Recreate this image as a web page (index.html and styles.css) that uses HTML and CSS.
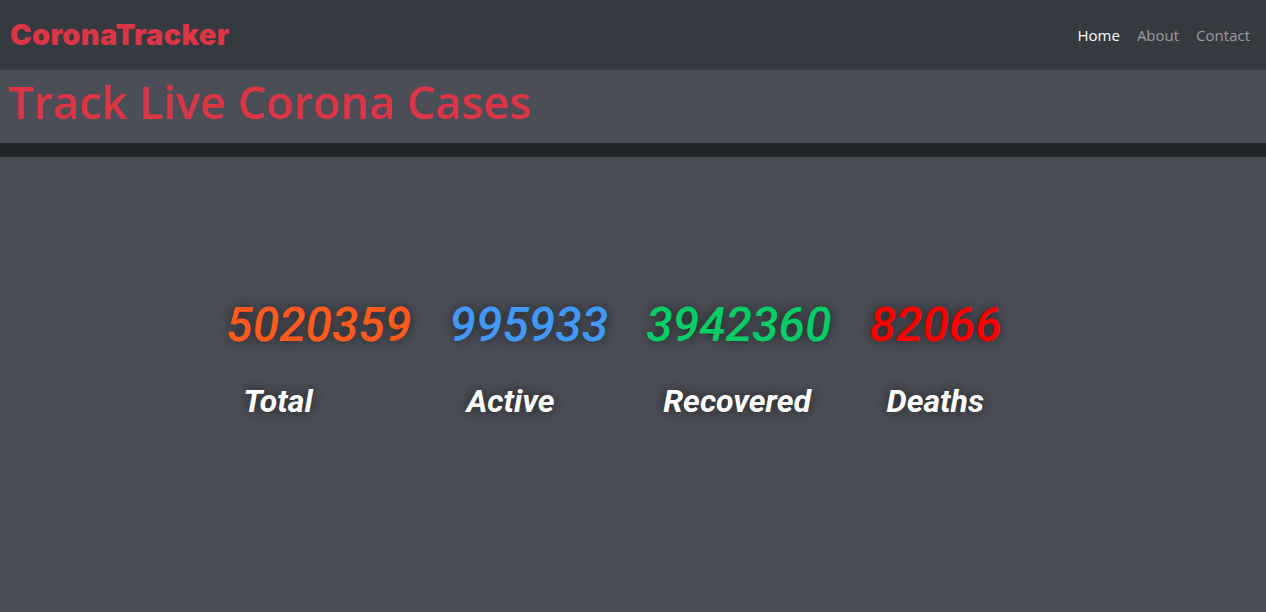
FILE: index.html
```html
<!DOCTYPE html>
<html>
<head>
<meta charset="utf-8">
<link rel="stylesheet" href="styles.css">
</head>
<body>
<nav class="navbar">
  <a class="brand" href="#">CoronaTracker</a>
  <ul class="nav-links">
    <li><a class="active" href="#">Home</a></li>
    <li><a href="#">About</a></li>
    <li><a href="#">Contact</a></li>
  </ul>
</nav>
<header class="hero">
  <h1>Track Live Corona Cases</h1>
</header>
<div class="band"></div>
<main class="stats">
  <div class="stat">
    <div class="num total">5020359</div>
    <div class="label">Total</div>
  </div>
  <div class="stat">
    <div class="num active">995933</div>
    <div class="label">Active</div>
  </div>
  <div class="stat">
    <div class="num recovered">3942360</div>
    <div class="label">Recovered</div>
  </div>
  <div class="stat">
    <div class="num deaths">82066</div>
    <div class="label">Deaths</div>
  </div>
</main>
</body>
</html>
```
FILE: styles.css
```css
html, body {
  margin: 0;
  padding: 0;
  height: 100%;
}
body {
  background: #4a4d55;
  font-family: "Open Sans", "Noto Sans", sans-serif;
}
.navbar {
  height: 70px;
  background: #343a40;
  display: flex;
  align-items: center;
  justify-content: space-between;
  padding: 0 16px 0 10px;
  box-sizing: border-box;
}
.brand {
  color: #dc3545;
  font-family: Inter, "Liberation Sans", Arial, sans-serif;
  font-weight: 900;
  font-size: 29px;
  text-decoration: none;
  letter-spacing: 0.3px;
  margin-top: -2px;
}
.nav-links {
  list-style: none;
  display: flex;
  gap: 17px;
  margin: 0;
  padding: 0;
}
.nav-links a {
  color: rgba(255, 255, 255, 0.5);
  font-size: 15px;
  text-decoration: none;
}
.nav-links a.active {
  color: #fff;
}
.hero {
  height: 73px;
  background: #4b4e56;
  padding: 0 8px;
  box-sizing: border-box;
}
.hero h1 {
  margin: 0;
  color: #dc3545;
  font-weight: 600;
  font-size: 45px;
  line-height: 64px;
}
.band {
  height: 14px;
  background: #222527;
}
.stats {
  display: flex;
  justify-content: center;
  padding-top: 140px;
}
.stat {
  padding-right: 38px;
  font-family: Roboto, "Noto Sans", sans-serif;
  font-style: italic;
}
.num {
  font-size: 48px;
  font-weight: 500;
  line-height: 56px;
  text-shadow: 0 0 12px rgba(0, 0, 0, 0.6);
}
.label {
  color: #fff;
  font-size: 32px;
  font-weight: 700;
  padding-left: 17px;
  margin-top: 29px;
  text-shadow: 0 0 12px rgba(0, 0, 0, 0.6);
}
.total { color: #fd5a1e; }
.active { color: #4299f5; }
.recovered { color: #06cd66; }
.deaths { color: #ff0000; }
```
